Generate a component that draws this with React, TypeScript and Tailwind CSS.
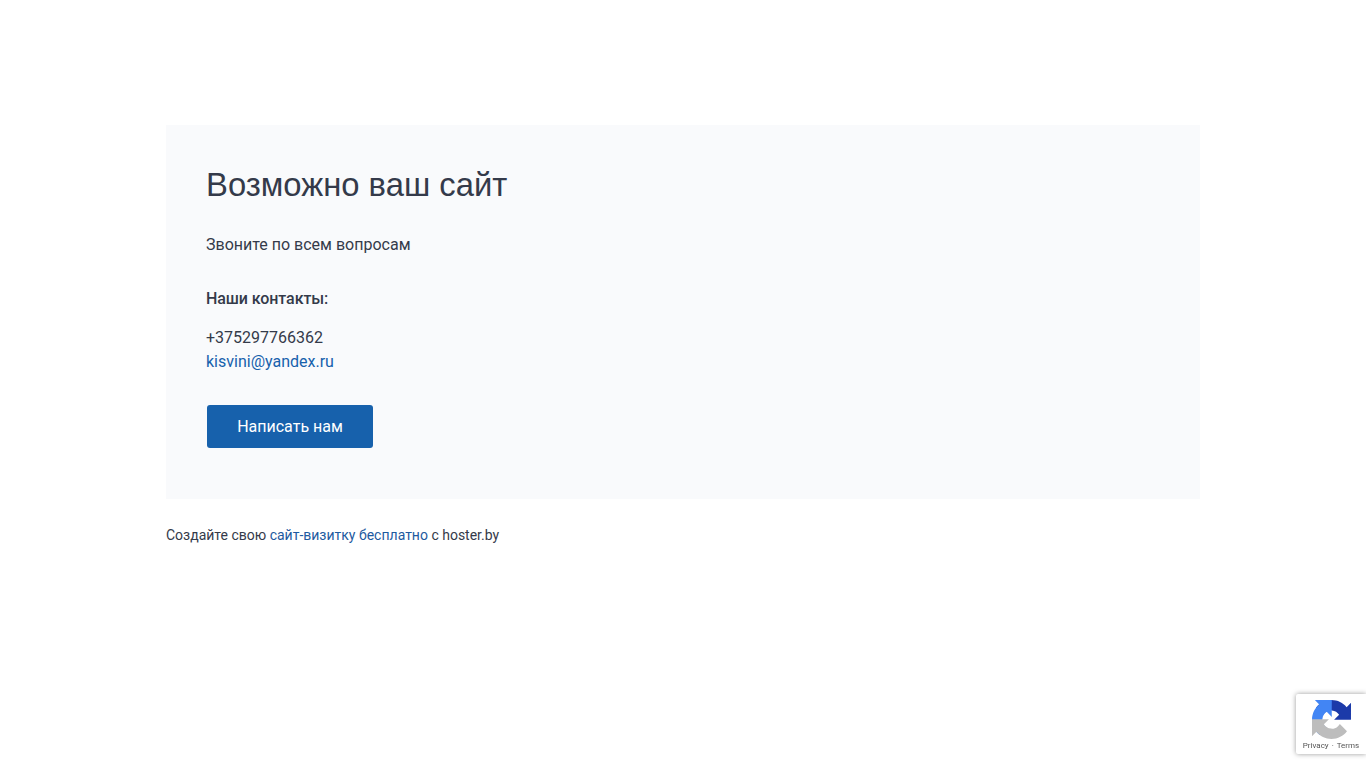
const d =
  "M64 31.955l-.033-1.37V4.687l-7.16 7.16C50.948 4.674 42.033.093 32.05.093c-10.4 0-19.622 4.96-25.458 12.64l11.736 11.86c1.027-1.9 2.487-3.532 4.26-4.764 2.05-1.6 4.952-2.906 8.968-2.906.485 0 .86.057 1.135.163 4.976.393 9.29 3.14 11.83 7.124l-8.307 8.307c10.522-.04 22.4-.066 27.327-.001z";

export default function App() {
  return (
    <div className="min-h-[768px] bg-white font-['Roboto',sans-serif] text-[#343a4a]">
      <div className="mx-auto w-[1034px] pt-[125px]">
        <div className="h-[374px] bg-[#f9fafc] pl-10 pt-10">
          <h1 className="font-['Liberation_Sans',sans-serif] text-[32.8px] leading-10 text-[#343a4a]">Возможно ваш сайт</h1>
          <p className="mt-[28px] text-base leading-6">Звоните по всем вопросам</p>
          <p className="mt-[30px] text-base leading-6 font-medium tracking-[-0.08px]">Наши контакты:</p>
          <p className="mt-[15px] text-base leading-6">+375297766362</p>
          <a className="block text-base leading-6 text-[#1761ac]">kisvini@yandex.ru</a>
          <button className="mt-[31px] ml-px h-[43px] w-[166px] rounded-[3px] bg-[#1761ac] text-base font-[450] text-white">Написать нам</button>
        </div>
        <p className="mt-[26px] text-sm leading-5">
          Создайте свою <a className="text-[#1d5aa0]">сайт-визитку бесплатно</a> с hoster.by
        </p>
      </div>
      <div className="fixed right-0 bottom-[14px] flex h-[60px] w-[70px] flex-col items-center rounded-l-[2px] bg-white pt-[6px] shadow-[0_0_5px_rgba(128,128,128,0.8)]">
        <svg width="39" height="39" viewBox="0 0 64 64">
          <path d={d} fill="#1c3aa9" />
          <path d={d} fill="#4285f4" transform="rotate(-90 32 32)" />
          <path d={d} fill="#bdbdbd" transform="rotate(180 32 32)" />
        </svg>
        <div className="mt-[2px] flex items-center gap-[3px] font-['Roboto',sans-serif] text-[8px] leading-[10px] text-[#555]">
          <span>Privacy</span><span>·</span><span>Terms</span>
        </div>
      </div>
    </div>
  );
}
